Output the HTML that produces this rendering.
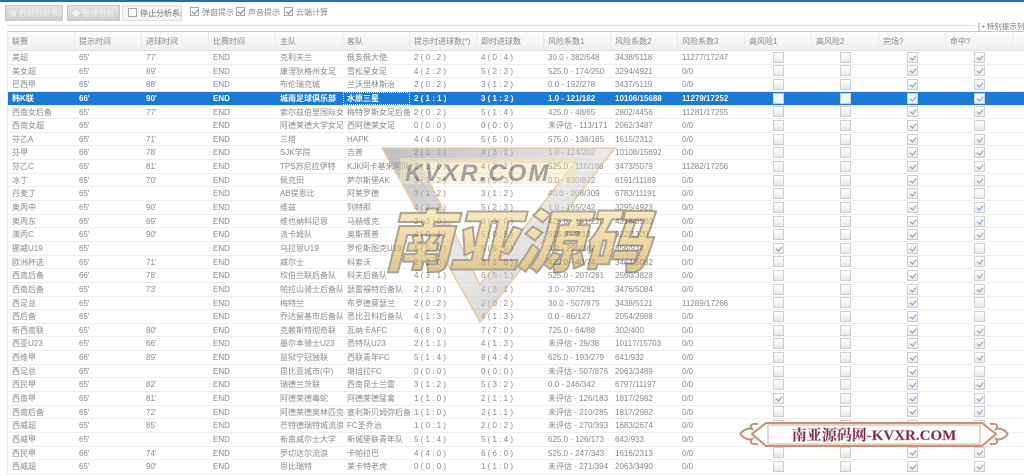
<!DOCTYPE html>
<html><head><meta charset="utf-8"><style>
*{margin:0;padding:0;box-sizing:border-box}
body{width:1024px;height:476px;overflow:hidden;background:#fff;font-family:"Liberation Sans","Noto Sans CJK SC",sans-serif;font-size:8px;color:#8a8a8a;position:relative}
.topline{position:absolute;left:0;top:0;width:1024px;height:2px;background:#1f6fb8}
.tb{position:absolute;top:5px;height:16px;font-size:8px;line-height:16px;white-space:nowrap;overflow:hidden}
.btn{background:linear-gradient(#e4e4e4,#cfcfcf);border:1px solid #c8c8c8;color:#f4f4f4}
.btn3{background:#f5f5f5;border:1px solid #e0e0e0;color:#777;padding-left:5px}
.cb{display:inline-block;width:9px;height:9px;border:1px solid #a8a8a8;background:#fff;vertical-align:-1px;margin-right:3px;position:relative}
.cb.k::after{content:"";position:absolute;left:2px;top:0px;width:3px;height:5px;border:solid #5a86bf;border-width:0 1.2px 1.2px 0;transform:rotate(40deg)}
.sep{position:absolute;left:7px;top:25px;width:968px;height:1px;background:#dcdcdc}
.tip{position:absolute;left:978px;top:21px;font-size:7.5px;color:#777;white-space:nowrap}
.tbl{position:absolute;left:7px;top:31px;width:1017px;border-top:1px solid #f0c080;border-left:1px solid #e6e6e6}
.r{display:flex;height:13.65px;line-height:13px;border-bottom:1px solid #efefef;white-space:nowrap}
.r>div{width:67px;padding-left:4px;overflow:hidden;flex:none}
.h{height:19px;line-height:19px;background:linear-gradient(#fcfcfc,#f0f0f0);border-bottom:1px solid #e0e0e0;color:#888}
.h>div{border-right:1px solid #ebebeb}
.r>div.c{padding-left:0;text-align:center;display:flex;align-items:center;justify-content:center}
.r>div.c .cb{margin:0;width:11px;height:11px;border:1px solid #cfcfcf;background:linear-gradient(#fff,#e9e9e9)}
.r>div.c .cb.k::after{left:3px;top:1px;border-color:#7a9cc8}
.s{background:#1b7ad6;color:#fff;font-weight:bold}
.s>div.c .cb{background:#f4f8ff}
.wm{position:absolute;left:0;top:0;pointer-events:none}
.ban{position:absolute;left:738px;top:419px;width:272px;height:31px}
</style></head><body>
<div class="topline"></div>
<div class="tb btn" style="left:5px;width:58px;padding-left:4px">⊞ 启动分析系统</div>
<div class="tb btn" style="left:67px;width:53px;padding-left:4px">◆ 暂停分析</div>
<div class="tb btn3" style="left:122px;width:60px;"><span class="cb"></span>停止分析系统</div>
<div class="tb" style="left:190px"><span class="cb k"></span>弹窗提示</div>
<div class="tb" style="left:236px"><span class="cb k"></span>声音提示</div>
<div class="tb" style="left:284px"><span class="cb k"></span>云端计算</div>
<div class="sep"></div>
<div class="tip">[ • 特别提示列</div>
<div class="tbl">
<div class="r h"><div>联赛</div><div>提示时间</div><div>进球时间</div><div>比赛时间</div><div>主队</div><div>客队</div><div>提示时进球数(*)</div><div>即时进球数</div><div>风险系数1</div><div>风险系数2</div><div>风险系数3</div><div>高风险1</div><div>高风险2</div><div>完场?</div><div>命中?</div></div>
<div class="r"><div>美超</div><div>65'</div><div>77'</div><div>END</div><div>克利夫兰</div><div>俄亥俄大使</div><div>2 ( 0 : 2 )</div><div>4 ( 0 : 4 )</div><div>30.0 - 382/548</div><div>3438/5118</div><div>11277/17247</div><div class="c"><span class="cb"></span></div><div class="c"><span class="cb"></span></div><div class="c"><span class="cb k"></span></div><div class="c"><span class="cb k"></span></div></div>
<div class="r"><div>美女超</div><div>65'</div><div>89'</div><div>END</div><div>康涅狄格州女足</div><div>雪松星女足</div><div>4 ( 2 : 2 )</div><div>5 ( 2 : 3 )</div><div>525.0 - 174/250</div><div>3294/4921</div><div>0/0</div><div class="c"><span class="cb"></span></div><div class="c"><span class="cb"></span></div><div class="c"><span class="cb k"></span></div><div class="c"><span class="cb k"></span></div></div>
<div class="r"><div>巴西甲</div><div>65'</div><div>88'</div><div>END</div><div>布伦瑞克城</div><div>兰沃里林斯治</div><div>2 ( 0 : 2 )</div><div>3 ( 1 : 2 )</div><div>0.0 - 192/278</div><div>3437/5119</div><div>0/0</div><div class="c"><span class="cb"></span></div><div class="c"><span class="cb"></span></div><div class="c"><span class="cb k"></span></div><div class="c"><span class="cb k"></span></div></div>
<div class="r s"><div>韩K联</div><div>66'</div><div>90'</div><div>END</div><div>城南足球俱乐部</div><div style="outline:1px dotted #fff;outline-offset:-1px">水原三星</div><div>2 ( 1 : 1 )</div><div>3 ( 1 : 2 )</div><div>1.0 - 121/182</div><div>10106/15688</div><div>11279/17252</div><div class="c"><span class="cb"></span></div><div class="c"><span class="cb"></span></div><div class="c"><span class="cb k"></span></div><div class="c"><span class="cb k"></span></div></div>
<div class="r"><div>西南女后备</div><div>65'</div><div>77'</div><div>END</div><div>索尔兹伯里国际女...</div><div>梅特罗斯女足后备队</div><div>2 ( 0 : 2 )</div><div>5 ( 1 : 4 )</div><div>425.0 - 48/65</div><div>2802/4456</div><div>11281/17255</div><div class="c"><span class="cb"></span></div><div class="c"><span class="cb"></span></div><div class="c"><span class="cb k"></span></div><div class="c"><span class="cb k"></span></div></div>
<div class="r"><div>西南女超</div><div>65'</div><div></div><div>END</div><div>阿德莱德大学女足</div><div>西阿德莱女足</div><div>0 ( 0 : 0 )</div><div>0 ( 0 : 0 )</div><div>未评估 - 113/171</div><div>2062/3487</div><div>0/0</div><div class="c"><span class="cb"></span></div><div class="c"><span class="cb"></span></div><div class="c"><span class="cb k"></span></div><div class="c"><span class="cb"></span></div></div>
<div class="r"><div>芬乙A</div><div>65'</div><div>71'</div><div>END</div><div>三塔</div><div>HAPK</div><div>4 ( 4 : 0 )</div><div>5 ( 5 : 0 )</div><div>575.0 - 138/185</div><div>1615/2312</div><div>0/0</div><div class="c"><span class="cb"></span></div><div class="c"><span class="cb"></span></div><div class="c"><span class="cb k"></span></div><div class="c"><span class="cb k"></span></div></div>
<div class="r"><div>芬甲</div><div>66'</div><div>78'</div><div>END</div><div>SJK学院</div><div>吉普</div><div>2 ( 1 : 1 )</div><div>4 ( 3 : 1 )</div><div>1.0 - 124/202</div><div>10108/15692</div><div>0/0</div><div class="c"><span class="cb"></span></div><div class="c"><span class="cb"></span></div><div class="c"><span class="cb k"></span></div><div class="c"><span class="cb k"></span></div></div>
<div class="r"><div>芬乙C</div><div>65'</div><div>81'</div><div>END</div><div>TPS苏尼拉伊特</div><div>KJK阿卡基米阿队</div><div>2 ( 2 : 0 )</div><div>4 ( 3 : 1 )</div><div>525.0 - 116/186</div><div>3473/5079</div><div>11282/17256</div><div class="c"><span class="cb"></span></div><div class="c"><span class="cb"></span></div><div class="c"><span class="cb k"></span></div><div class="c"><span class="cb k"></span></div></div>
<div class="r"><div>冰丁</div><div>65'</div><div>70'</div><div>END</div><div>佩克田</div><div>萨尔斯堡AK</div><div>3 ( 1 : 2 )</div><div>8 ( 5 : 3 )</div><div>0.0 - 830/872</div><div>6191/11189</div><div>0/0</div><div class="c"><span class="cb"></span></div><div class="c"><span class="cb"></span></div><div class="c"><span class="cb k"></span></div><div class="c"><span class="cb k"></span></div></div>
<div class="r"><div>丹麦丁</div><div>65'</div><div></div><div>END</div><div>AB提恩比</div><div>阿莱罗德</div><div>3 ( 1 : 2 )</div><div>3 ( 1 : 2 )</div><div>40.0 - 208/309</div><div>6783/11191</div><div>0/0</div><div class="c"><span class="cb"></span></div><div class="c"><span class="cb"></span></div><div class="c"><span class="cb k"></span></div><div class="c"><span class="cb"></span></div></div>
<div class="r"><div>奥丙中</div><div>65'</div><div>90'</div><div>END</div><div>维兹</div><div>列特那</div><div>4 ( 2 : 2 )</div><div>5 ( 2 : 3 )</div><div>1.0 - 165/242</div><div>3295/4923</div><div>0/0</div><div class="c"><span class="cb"></span></div><div class="c"><span class="cb"></span></div><div class="c"><span class="cb k"></span></div><div class="c"><span class="cb k"></span></div></div>
<div class="r"><div>奥丙东</div><div>65'</div><div>69'</div><div>END</div><div>维也纳科尼恩</div><div>马赫维克</div><div>3 ( 3 : 0 )</div><div>3 ( 3 : 0 )</div><div>425.0 - 151/220</div><div>4218/6580</div><div>0/0</div><div class="c"><span class="cb"></span></div><div class="c"><span class="cb"></span></div><div class="c"><span class="cb k"></span></div><div class="c"><span class="cb k"></span></div></div>
<div class="r"><div>澳丙C</div><div>65'</div><div>90'</div><div>END</div><div>派卡姆队</div><div>奥斯赛普</div><div>4 ( 0 : 4 )</div><div>5 ( 0 : 5 )</div><div>525.0 - 9/13</div><div>922/1320</div><div>0/0</div><div class="c"><span class="cb"></span></div><div class="c"><span class="cb"></span></div><div class="c"><span class="cb k"></span></div><div class="c"><span class="cb k"></span></div></div>
<div class="r"><div>挪威U19</div><div>65'</div><div></div><div>END</div><div>乌拉恩U19</div><div>罗伦斯图克U19</div><div>5 ( 5 : 0 )</div><div>5 ( 5 : 0 )</div><div>3.0 - 295/387</div><div>856/934</div><div>0/0</div><div class="c"><span class="cb k"></span></div><div class="c"><span class="cb"></span></div><div class="c"><span class="cb k"></span></div><div class="c"><span class="cb"></span></div></div>
<div class="r"><div>欧洲杯选</div><div>65'</div><div>71'</div><div>END</div><div>威尔士</div><div>科索沃</div><div>2 ( 2 : 0 )</div><div>3 ( 3 : 0 )</div><div>425.0 - 40/74</div><div>3444/5082</div><div>0/0</div><div class="c"><span class="cb"></span></div><div class="c"><span class="cb"></span></div><div class="c"><span class="cb k"></span></div><div class="c"><span class="cb k"></span></div></div>
<div class="r"><div>西南后备</div><div>66'</div><div>78'</div><div>END</div><div>坎伯兰联后备队</div><div>科夫后备队</div><div>4 ( 3 : 1 )</div><div>6 ( 5 : 1 )</div><div>525.0 - 207/281</div><div>2560/3828</div><div>0/0</div><div class="c"><span class="cb"></span></div><div class="c"><span class="cb"></span></div><div class="c"><span class="cb k"></span></div><div class="c"><span class="cb k"></span></div></div>
<div class="r"><div>西南后备</div><div>65'</div><div>73'</div><div>END</div><div>帕拉山骑士后备队</div><div>瑟雷福特后备队</div><div>2 ( 2 : 0 )</div><div>4 ( 3 : 1 )</div><div>3.0 - 307/281</div><div>3476/5084</div><div>0/0</div><div class="c"><span class="cb"></span></div><div class="c"><span class="cb"></span></div><div class="c"><span class="cb k"></span></div><div class="c"><span class="cb k"></span></div></div>
<div class="r"><div>西足总</div><div>65'</div><div></div><div>END</div><div>梅特兰</div><div>布罗德莫瑟兰</div><div>2 ( 0 : 2 )</div><div>2 ( 0 : 2 )</div><div>30.0 - 507/875</div><div>3438/5121</div><div>11289/17266</div><div class="c"><span class="cb"></span></div><div class="c"><span class="cb"></span></div><div class="c"><span class="cb k"></span></div><div class="c"><span class="cb"></span></div></div>
<div class="r"><div>西后备</div><div>65'</div><div></div><div>END</div><div>乔达留基市后备队</div><div>悉比丑科后备队</div><div>4 ( 1 : 3 )</div><div>4 ( 1 : 3 )</div><div>0.0 - 86/127</div><div>2054/2988</div><div>0/0</div><div class="c"><span class="cb"></span></div><div class="c"><span class="cb"></span></div><div class="c"><span class="cb k"></span></div><div class="c"><span class="cb"></span></div></div>
<div class="r"><div>新西南联</div><div>65'</div><div>80'</div><div>END</div><div>克赖斯特彻奇联</div><div>瓦纳卡AFC</div><div>6 ( 6 : 0 )</div><div>7 ( 7 : 0 )</div><div>725.0 - 64/88</div><div>302/400</div><div>0/0</div><div class="c"><span class="cb"></span></div><div class="c"><span class="cb"></span></div><div class="c"><span class="cb k"></span></div><div class="c"><span class="cb k"></span></div></div>
<div class="r"><div>西亚U23</div><div>65'</div><div>66'</div><div>END</div><div>墨尔本骑士U23</div><div>悉特队U23</div><div>2 ( 1 : 1 )</div><div>4 ( 1 : 3 )</div><div>未评估 - 29/38</div><div>10117/15703</div><div>0/0</div><div class="c"><span class="cb"></span></div><div class="c"><span class="cb"></span></div><div class="c"><span class="cb k"></span></div><div class="c"><span class="cb k"></span></div></div>
<div class="r"><div>西维甲</div><div>66'</div><div>89'</div><div>END</div><div>监狱宁冠独联</div><div>西联青年FC</div><div>5 ( 1 : 4 )</div><div>8 ( 4 : 4 )</div><div>625.0 - 193/279</div><div>641/932</div><div>0/0</div><div class="c"><span class="cb"></span></div><div class="c"><span class="cb"></span></div><div class="c"><span class="cb k"></span></div><div class="c"><span class="cb k"></span></div></div>
<div class="r"><div>西足总</div><div>65'</div><div></div><div>END</div><div>昆比亚城市(中)</div><div>堪培拉FC</div><div>0 ( 0 : 0 )</div><div>0 ( 0 : 0 )</div><div>未评估 - 507/876</div><div>2063/3489</div><div>0/0</div><div class="c"><span class="cb"></span></div><div class="c"><span class="cb"></span></div><div class="c"><span class="cb k"></span></div><div class="c"><span class="cb"></span></div></div>
<div class="r"><div>西民甲</div><div>65'</div><div>82'</div><div>END</div><div>瑞德兰茨联</div><div>西南昆士兰雷</div><div>3 ( 1 : 2 )</div><div>5 ( 3 : 2 )</div><div>0.0 - 246/342</div><div>6797/11197</div><div>0/0</div><div class="c"><span class="cb"></span></div><div class="c"><span class="cb"></span></div><div class="c"><span class="cb k"></span></div><div class="c"><span class="cb k"></span></div></div>
<div class="r"><div>西南甲</div><div>65'</div><div>81'</div><div>END</div><div>阿德莱德毒蛇</div><div>阿德莱德猛禽</div><div>1 ( 1 : 0 )</div><div>2 ( 1 : 1 )</div><div>未评估 - 126/183</div><div>1817/2982</div><div>0/0</div><div class="c"><span class="cb k"></span></div><div class="c"><span class="cb"></span></div><div class="c"><span class="cb k"></span></div><div class="c"><span class="cb k"></span></div></div>
<div class="r"><div>西南后备</div><div>65'</div><div>72'</div><div>END</div><div>阿德莱德奥林匹克</div><div>塞利斯贝姆弥后备队</div><div>1 ( 1 : 0 )</div><div>2 ( 1 : 1 )</div><div>未评估 - 210/285</div><div>1817/2982</div><div>0/0</div><div class="c"><span class="cb"></span></div><div class="c"><span class="cb"></span></div><div class="c"><span class="cb k"></span></div><div class="c"><span class="cb k"></span></div></div>
<div class="r"><div>西威超</div><div>65'</div><div>85'</div><div>END</div><div>芒特德瑞特城流浪者</div><div>FC圣乔治</div><div>1 ( 0 : 1 )</div><div>2 ( 0 : 2 )</div><div>未评估 - 270/393</div><div>1683/2674</div><div>0/0</div><div class="c"><span class="cb"></span></div><div class="c"><span class="cb"></span></div><div class="c"><span class="cb k"></span></div><div class="c"><span class="cb k"></span></div></div>
<div class="r"><div>西威甲</div><div>65'</div><div></div><div>END</div><div>新南威尔士大学</div><div>新城堡联青年队</div><div>5 ( 1 : 4 )</div><div>5 ( 1 : 4 )</div><div>625.0 - 126/173</div><div>642/933</div><div>0/0</div><div class="c"><span class="cb"></span></div><div class="c"><span class="cb"></span></div><div class="c"><span class="cb k"></span></div><div class="c"><span class="cb k"></span></div></div>
<div class="r"><div>西民甲</div><div>66'</div><div>74'</div><div>END</div><div>罗切达尔流浪</div><div>卡帕拉巴</div><div>4 ( 4 : 0 )</div><div>6 ( 6 : 0 )</div><div>525.0 - 247/343</div><div>1616/2313</div><div>0/0</div><div class="c"><span class="cb"></span></div><div class="c"><span class="cb"></span></div><div class="c"><span class="cb k"></span></div><div class="c"><span class="cb k"></span></div></div>
<div class="r"><div>西威超</div><div>65'</div><div>90'</div><div>END</div><div>思比瑞特</div><div>莱卡特老虎</div><div>0 ( 0 : 0 )</div><div>1 ( 1 : 0 )</div><div>未评估 - 271/394</div><div>2063/3490</div><div>0/0</div><div class="c"><span class="cb"></span></div><div class="c"><span class="cb"></span></div><div class="c"><span class="cb k"></span></div><div class="c"><span class="cb k"></span></div></div>
</div>
<svg class="wm" width="1024" height="476">
<defs><linearGradient id="g" x1="0" y1="0" x2="0" y2="1"><stop offset="0" stop-color="#fff3c0"/><stop offset=".5" stop-color="#e8c060"/><stop offset="1" stop-color="#b88a30"/></linearGradient>
<linearGradient id="gr" x1="0" y1="0" x2="1" y2="1"><stop offset="0" stop-color="#8a8a8a"/><stop offset=".5" stop-color="#d8d8d8"/><stop offset="1" stop-color="#9a9a9a"/></linearGradient></defs>
<g opacity="0.55">
<path d="M382 148 L615 148 L480 322 Z M420 162 L575 162 L480 285 Z" fill="url(#gr)" fill-rule="evenodd" stroke="#e0a060" stroke-width="1.5"/>
<rect x="400" y="158" width="175" height="26" fill="#f0d890" opacity=".6"/>
<text x="405" y="181" font-family="Liberation Sans" font-weight="bold" font-style="italic" font-size="24" fill="#555" letter-spacing="2">KVXR.COM</text>
<text x="384" y="266" font-family="Noto Sans CJK SC,sans-serif" font-weight="900" font-style="italic" font-size="68" fill="url(#g)" stroke="#6a5a3a" stroke-width="2" letter-spacing="-2">南亚源码</text>
</g>
</svg>
<svg class="ban" viewBox="0 0 272 31">
<path d="M14 15 L28 4 L244 4 L258 15 L244 27 L28 27 Z" fill="#fff" stroke="#c99078" stroke-width="2"/>
<path d="M2 15 Q8 8 14 10 Q10 4 20 5 M2 15 Q8 22 14 20 Q10 26 20 25 M270 15 Q264 8 258 10 Q262 4 252 5 M270 15 Q264 22 258 20 Q262 26 252 25" fill="none" stroke="#c99078" stroke-width="2"/>
<rect x="30" y="6" width="212" height="19" fill="#fff" stroke="#d8a890" stroke-width="1"/>
<text x="136" y="21" text-anchor="middle" font-family="Liberation Serif,Noto Serif CJK SC,serif" font-weight="bold" font-size="15" fill="#7a2838" stroke="#c090a0" stroke-width=".4">南亚源码网-KVXR.COM</text>
</svg>
</body></html>
